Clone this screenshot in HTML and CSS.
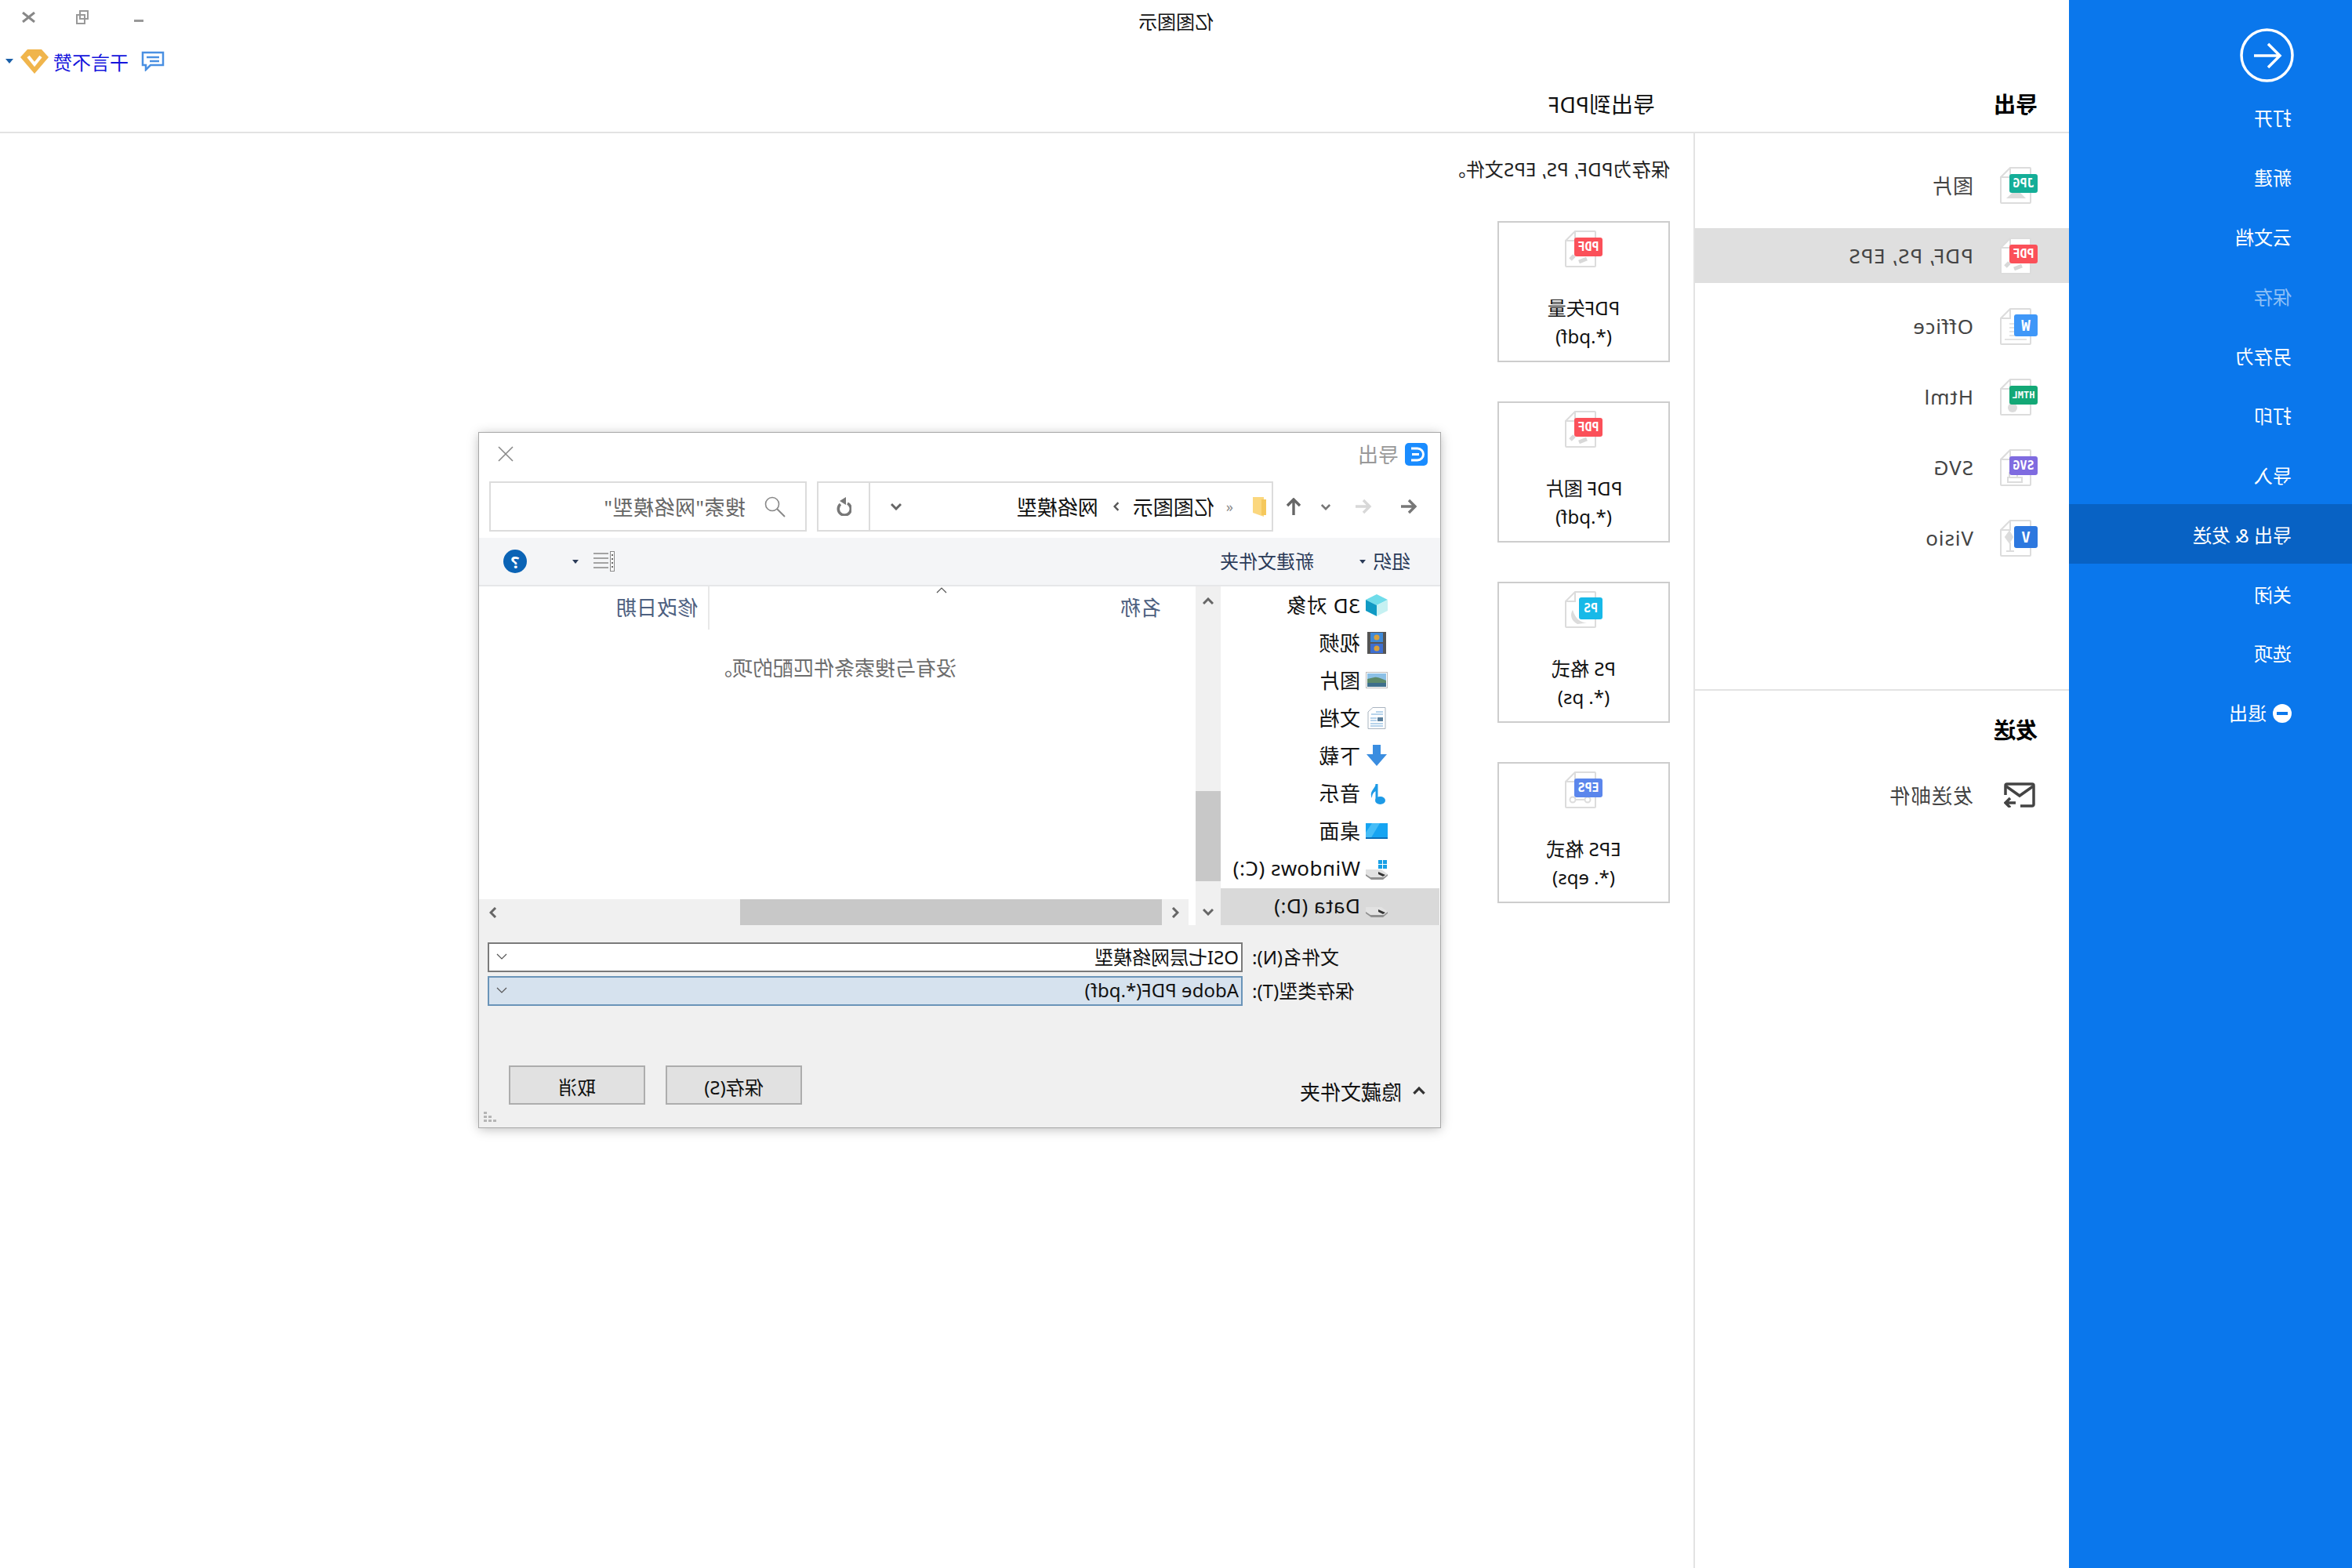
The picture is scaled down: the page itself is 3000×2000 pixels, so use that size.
FILE: index.html
```html
<!DOCTYPE html>
<html lang="zh-CN">
<head>
    <meta charset="UTF-8">
    <title>亿图图示</title>
    <link rel="stylesheet" href="styles.css">
</head>
<body>
    <!-- shared icon parts -->
    <svg class="defs" width="0" height="0">
        <symbol id="sheet" viewBox="0 0 40 47">
            <path d="M1 2a1 1 0 0 1 1-1H27L39 13V45a1 1 0 0 1-1 1H2a1 1 0 0 1-1-1Z" fill="#fff" stroke="#dcdcdc" stroke-width="2"/>
            <path d="M27 1V13H39" fill="none" stroke="#dcdcdc" stroke-width="2"/>
        </symbol>
        <symbol id="chev-down" viewBox="0 0 14 10">
            <path d="M1 2L7 8L13 2" fill="none" stroke="currentColor" stroke-width="3"/>
        </symbol>
        <symbol id="chev-thin" viewBox="0 0 14 8">
            <path d="M1 1L7 7L13 1" fill="none" stroke="#555" stroke-width="1.2"/>
        </symbol>
        <symbol id="chev-left" viewBox="0 0 10 14">
            <path d="M8 1L2 7L8 13" fill="none" stroke="currentColor" stroke-width="3"/>
        </symbol>
        <symbol id="arrow-left" viewBox="0 0 22 20">
            <path d="M21 10H3M11 2L3 10L11 18" fill="none" stroke="currentColor" stroke-width="3.4"/>
        </symbol>
        <symbol id="drive" viewBox="0 0 28 28">
            <path d="M0 20L8 14H28V20L20 26H6Z" fill="#e2e2e2"/>
            <path d="M0 20L5 24H22L28 20V22L21 27H6L0 22Z" fill="#8f8f8f"/>
            <path d="M3 21L12 17V20L6 23Z" fill="#333"/>
        </symbol>
    </svg>

    <div class="app">
        <!-- blue menu -->
        <nav class="sidebar">
            <svg class="back-btn" viewBox="0 0 69 69">
                <circle cx="34.5" cy="34.5" r="32.5" fill="none" stroke="#fff" stroke-width="3.5"/>
                <path d="M51 35H19M33 20L18 35L33 50" fill="none" stroke="#fff" stroke-width="3.5"/>
            </svg>
            <div class="menu-item">打开</div>
            <div class="menu-item">新建</div>
            <div class="menu-item">云文档</div>
            <div class="menu-item disabled">保存</div>
            <div class="menu-item">另存为</div>
            <div class="menu-item">打印</div>
            <div class="menu-item">导入</div>
            <div class="menu-item active">导出 &amp; 发送</div>
            <div class="menu-item">关闭</div>
            <div class="menu-item">选项</div>
            <div class="menu-item">
                <svg class="exit-icon" viewBox="0 0 24 24">
                    <circle cx="12" cy="12" r="12" fill="#fff"/>
                    <rect x="5" y="10" width="14" height="4" fill="#0a77ec"/>
                </svg>
                退出
            </div>
        </nav>

        <main class="main">
            <header class="topbar">
                <div class="app-title">亿图图示</div>
                <div class="top-tools">
                    <div class="win-btns">
                        <svg class="win-min" viewBox="0 0 12 3"><rect width="12" height="3" fill="#999"/></svg>
                        <svg class="win-restore" viewBox="0 0 16 18">
                            <path d="M1 1H11V11H1Z M5 6H15V17H5Z" fill="#fff" stroke="#999" stroke-width="2"/>
                        </svg>
                        <svg class="win-close" viewBox="0 0 17 14">
                            <path d="M1 1L16 13M16 1L1 13" stroke="#888" stroke-width="3"/>
                        </svg>
                    </div>
                    <div class="account">
                        <svg class="chat-icon" viewBox="0 0 30 26">
                            <path d="M2 2H28V18L24 18V24L18 18H2Z M7 8H23M7 13H19" fill="none" stroke="#4a90e2" stroke-width="2.5"/>
                        </svg>
                        <span class="account-name">干言不赞</span>
                        <svg class="vip-icon" viewBox="0 0 36 32">
                            <path d="M9 1H27L36 11L18 32L0 11Z" fill="#f0b54c"/>
                            <path d="M10 10L18 20L26 10" fill="none" stroke="#fff" stroke-width="4"/>
                        </svg>
                        <span class="caret caret-blue"></span>
                    </div>
                </div>
            </header>

            <div class="heads">
                <div class="head-list">导出</div>
                <div class="head-detail">导出到PDF</div>
            </div>

            <div class="body-row">
                <section class="export-list">
                    <div class="export-rows">
                        <div class="export-row">
                            <span class="file-icon">
                                <svg class="sheet" viewBox="0 0 40 47">
                                    <use href="#sheet"/>
                                    <path d="M7 40L19 28L32 40Z" fill="#dcdcdc"/>
                                </svg>
                                <span class="badge badge-jpg">JPG</span>
                            </span>
                            图片
                        </div>
                        <div class="export-row selected">
                            <span class="file-icon">
                                <svg class="sheet" viewBox="0 0 40 47">
                                    <use href="#sheet"/>
                                    <path d="M12 36L22 40M28 32L33 37" stroke="#d8d8d8" stroke-width="5"/>
                                </svg>
                                <span class="badge badge-pdf">PDF</span>
                            </span>
                            PDF, PS, EPS
                        </div>
                        <div class="export-row">
                            <span class="file-icon">
                                <svg class="sheet" viewBox="0 0 40 47">
                                    <use href="#sheet"/>
                                    <path d="M6 40H34M6 35H28M6 30H28M6 25H28M6 20H28" stroke="#dcdcdc" stroke-width="1.5"/>
                                </svg>
                                <span class="badge badge-tall badge-word">W</span>
                            </span>
                            Office
                        </div>
                        <div class="export-row">
                            <span class="file-icon">
                                <svg class="sheet" viewBox="0 0 40 47">
                                    <use href="#sheet"/>
                                    <circle cx="24" cy="37" r="6" fill="#dcdcdc"/>
                                </svg>
                                <span class="badge badge-html">HTML</span>
                            </span>
                            Html
                        </div>
                        <div class="export-row">
                            <span class="file-icon">
                                <svg class="sheet" viewBox="0 0 40 47">
                                    <use href="#sheet"/>
                                    <path d="M12 36H30V42H12ZM18 30H28V36H18Z" fill="none" stroke="#dcdcdc" stroke-width="2"/>
                                </svg>
                                <span class="badge badge-svg">SVG</span>
                            </span>
                            SVG
                        </div>
                        <div class="export-row">
                            <span class="file-icon">
                                <svg class="sheet" viewBox="0 0 40 47">
                                    <use href="#sheet"/>
                                    <path d="M28 15L33 22L28 29L24 22ZM27 29V40M22 40H32" fill="#dcdcdc" stroke="#dcdcdc" stroke-width="2"/>
                                </svg>
                                <span class="badge badge-tall badge-visio">V</span>
                            </span>
                            Visio
                        </div>
                    </div>

                    <div class="send-block">
                        <div class="head-list">发送</div>
                        <div class="export-row send-row">
                            <span class="file-icon">
                                <svg class="mail-icon" viewBox="0 0 40 32">
                                    <path d="M19 30H4a2 2 0 0 1-2-2V4a2 2 0 0 1 2-2H36a2 2 0 0 1 2 2V16" fill="none" stroke="#444" stroke-width="3.5"/>
                                    <path d="M3 5L20 17L37 5" fill="none" stroke="#444" stroke-width="3.5"/>
                                    <path d="M25 26H37M32 20L38 26L32 32" fill="none" stroke="#444" stroke-width="3.5"/>
                                </svg>
                            </span>
                            发送邮件
                        </div>
                    </div>
                </section>

                <section class="export-detail">
                    <p class="detail-desc">保存为PDF, PS, EPS文件。</p>
                    <div class="card">
                        <span class="file-icon">
                            <svg class="sheet" viewBox="0 0 40 47">
                                <use href="#sheet"/>
                                <path d="M12 36L22 40M28 32L33 37" stroke="#d8d8d8" stroke-width="5"/>
                            </svg>
                            <span class="badge badge-pdf">PDF</span>
                        </span>
                        <div class="card-text">PDF矢量<br>(*.pdf)</div>
                    </div>
                    <div class="card">
                        <span class="file-icon">
                            <svg class="sheet" viewBox="0 0 40 47">
                                <use href="#sheet"/>
                                <path d="M12 36L22 40M28 32L33 37" stroke="#d8d8d8" stroke-width="5"/>
                            </svg>
                            <span class="badge badge-pdf">PDF</span>
                        </span>
                        <div class="card-text">PDF 图片<br>(*.pdf)</div>
                    </div>
                    <div class="card">
                        <span class="file-icon">
                            <svg class="sheet" viewBox="0 0 40 47">
                                <use href="#sheet"/>
                                <path d="M8 40C16 42 26 38 30 24C34 30 32 38 24 42" fill="#dcdcdc"/>
                            </svg>
                            <span class="badge badge-tall badge-ps">PS</span>
                        </span>
                        <div class="card-text">PS 格式<br>(*. ps)</div>
                    </div>
                    <div class="card">
                        <span class="file-icon">
                            <svg class="sheet" viewBox="0 0 40 47">
                                <use href="#sheet"/>
                                <path d="M11 36H30" stroke="#dcdcdc" stroke-width="2"/>
                                <circle cx="11" cy="36" r="3.5" fill="#fff" stroke="#dcdcdc" stroke-width="2"/>
                                <circle cx="30" cy="36" r="3.5" fill="#fff" stroke="#dcdcdc" stroke-width="2"/>
                            </svg>
                            <span class="badge badge-eps">EPS</span>
                        </span>
                        <div class="card-text">EPS 格式<br>(*. eps)</div>
                    </div>
                </section>
            </div>
        </main>

        <!-- save dialog -->
        <div class="dialog">
            <div class="dlg-title">
                <svg class="dlg-logo" viewBox="0 0 29 29">
                    <rect width="29" height="29" rx="5" fill="#1a8cff"/>
                    <path d="M21 7H13a7 7 0 0 0 0 15H21" fill="none" stroke="#fff" stroke-width="3"/>
                    <path d="M11 14.500H20" stroke="#fff" stroke-width="3"/>
                </svg>
                <span>导出</span>
                <svg class="dlg-close" viewBox="0 0 20 20">
                    <path d="M1 1L19 19M19 1L1 19" stroke="#888" stroke-width="1.6"/>
                </svg>
            </div>

            <div class="dlg-nav">
                <svg class="nav-arrow nav-back"><use href="#arrow-left"/></svg>
                <svg class="nav-arrow nav-forward"><use href="#arrow-left"/></svg>
                <svg class="nav-recent"><use href="#chev-down"/></svg>
                <svg class="nav-up" viewBox="0 0 18 22">
                    <path d="M9 22V3M1 10L9 2L17 10" fill="none" stroke="#666" stroke-width="3.400"/>
                </svg>
                <div class="address">
                    <svg class="folder" viewBox="0 0 17 26">
                        <path d="M3 1H17V21L3 26Z" fill="#fbd77e"/>
                        <path d="M0 4H6V24H0Z" fill="#f5c85c"/>
                    </svg>
                    <span class="crumb-more">«</span>
                    <span class="crumb crumb-first">亿图图示</span>
                    <svg class="crumb-sep"><use href="#chev-left"/></svg>
                    <span class="crumb crumb-last">网络模型</span>
                    <svg class="addr-down"><use href="#chev-down"/></svg>
                    <div class="addr-refresh">
                        <svg class="refresh-icon" viewBox="0 0 20 24">
                            <path d="M6 7A8 8 0 1 0 15 6" fill="none" stroke="#777" stroke-width="3.500" transform="matrix(-1 0 0 1 20 2)"/>
                            <path d="M5 0L13 5L5 10Z" fill="#777" transform="translate(2 0)"/>
                        </svg>
                    </div>
                </div>
                <div class="search-box">
                    <svg class="search-icon" viewBox="0 0 27 27">
                        <circle cx="17" cy="10" r="8.500" fill="none" stroke="#888" stroke-width="1.600"/>
                        <path d="M11 16L1 26" stroke="#888" stroke-width="2"/>
                    </svg>
                    <span class="search-text">搜索"网络模型"</span>
                </div>
            </div>

            <div class="dlg-toolbar">
                <span class="tool-organize">组织</span>
                <span class="caret caret-dark caret-organize"></span>
                <span class="tool-newfolder">新建文件夹</span>
                <svg class="view-icon" viewBox="0 0 27 26">
                    <rect x="0.500" y="0.500" width="5" height="25" fill="#fff" stroke="#888"/>
                    <path d="M2 5H4M2 10H4M2 15H4M2 20H4" stroke="#666" stroke-width="2"/>
                    <path d="M8 3H27M8 9H27M8 15H27M8 21H27" stroke="#888" stroke-width="1.500"/>
                </svg>
                <span class="caret caret-dark caret-view"></span>
                <span class="help-btn">?</span>
            </div>

            <div class="dlg-body">
                <div class="nav-pane">
                    <div class="nav-item">
                        <svg class="nav-icon" viewBox="0 0 28 28">
                            <path d="M14 0L28 7L14 14L0 7Z" fill="#6fdcea"/>
                            <path d="M0 7L14 14V28L0 21Z" fill="#c6f1f2"/>
                            <path d="M28 7L14 14V28L28 21Z" fill="#0f9ac4"/>
                        </svg>
                        <span class="nav-label">3D 对象</span>
                    </div>
                    <div class="nav-item">
                        <svg class="nav-icon" viewBox="0 0 28 28">
                            <rect x="2" width="24" height="28" fill="#555"/>
                            <rect x="6" y="1" width="16" height="12" fill="#3f8ad8"/>
                            <rect x="6" y="15" width="16" height="12" fill="#3f6fd0"/>
                            <circle cx="14" cy="7" r="3.500" fill="#d9a13b"/>
                            <circle cx="14" cy="21" r="3.500" fill="#d9a13b"/>
                        </svg>
                        <span class="nav-label">视频</span>
                    </div>
                    <div class="nav-item">
                        <svg class="nav-icon" viewBox="0 0 28 28">
                            <rect x="0.500" y="3.500" width="27" height="20" fill="#fff" stroke="#bbb"/>
                            <rect x="2" y="5" width="24" height="17" fill="#8cc0e6"/>
                            <path d="M2 14C8 12 12 9 17 10C20 11 23 11 26 12V17H2Z" fill="#5d8a6a"/>
                            <rect x="2" y="17" width="24" height="5" fill="#3e6f8c"/>
                        </svg>
                        <span class="nav-label">图片</span>
                    </div>
                    <div class="nav-item">
                        <svg class="nav-icon" viewBox="0 0 28 28">
                            <path d="M3 .500H19L25 6V27.500H3Z" fill="#fff" stroke="#a9b4c0"/>
                            <path d="M6 6H15M6 9H21M14 14H22M14 17H22M6 21H22M6 24H22" stroke="#6fa8d8" stroke-width="1"/>
                            <rect x="6" y="13" width="7" height="5" fill="#5a7f9c"/>
                        </svg>
                        <span class="nav-label">文档</span>
                    </div>
                    <div class="nav-item">
                        <svg class="nav-icon" viewBox="0 0 28 28">
                            <path d="M9 0H19V12H27L14 27L1 12H9Z" fill="#3a8de0"/>
                        </svg>
                        <span class="nav-label">下载</span>
                    </div>
                    <div class="nav-item">
                        <svg class="nav-icon" viewBox="0 0 28 28">
                            <path d="M14 1V21" stroke="#1d9ae6" stroke-width="3"/>
                            <ellipse cx="9.500" cy="22" rx="6.500" ry="5" fill="#1d9ae6"/>
                            <path d="M15 1C16 7 24 10 20 19C20 13 17 11 15 10Z" fill="#1d9ae6"/>
                        </svg>
                        <span class="nav-label">音乐</span>
                    </div>
                    <div class="nav-item">
                        <svg class="nav-icon" viewBox="0 0 28 28">
                            <rect y="3" width="28" height="20" fill="#16a4f2"/>
                            <path d="M10 3H20L28 15V23H22Z" fill="#46bdf7"/>
                            <rect y="21" width="28" height="2" fill="#0c6fb8"/>
                        </svg>
                        <span class="nav-label">桌面</span>
                    </div>
                    <div class="nav-item">
                        <svg class="nav-icon" viewBox="0 0 28 28">
                            <use href="#drive"/>
                            <path d="M1 2H6V7H1ZM7 2H12V7H7ZM1 8H6V13H1ZM7 8H12V13H7Z" fill="#18a0e6"/>
                        </svg>
                        <span class="nav-label">Windows (C:)</span>
                    </div>
                    <div class="nav-item current">
                        <svg class="nav-icon" viewBox="0 0 28 28"><use href="#drive"/></svg>
                        <span class="nav-label">Data (D:)</span>
                    </div>
                </div>

                <div class="vscroll">
                    <svg class="vscroll-up"><use href="#chev-down"/></svg>
                    <div class="vscroll-thumb"></div>
                    <svg class="vscroll-down"><use href="#chev-down"/></svg>
                </div>

                <div class="file-list">
                    <div class="list-head">
                        <span class="col-name">名称</span>
                        <span class="col-date">修改日期</span>
                        <svg class="sort-mark"><use href="#chev-thin"/></svg>
                    </div>
                    <div class="list-empty">没有与搜索条件匹配的项。</div>
                    <div class="hscroll">
                        <svg class="hscroll-left"><use href="#chev-left"/></svg>
                        <div class="hscroll-thumb"></div>
                        <svg class="hscroll-right"><use href="#chev-left"/></svg>
                    </div>
                </div>
            </div>

            <div class="dlg-footer">
                <div class="form-row">
                    <label>文件名(N):</label>
                    <div class="field">OSI七层网络模型<svg class="field-chev"><use href="#chev-thin"/></svg></div>
                </div>
                <div class="form-row">
                    <label>保存类型(T):</label>
                    <div class="field field-selected">Adobe PDF(*.pdf)<svg class="field-chev"><use href="#chev-thin"/></svg></div>
                </div>
                <div class="dlg-actions">
                    <svg class="hide-chev"><use href="#chev-down"/></svg>
                    <span class="hide-folders">隐藏文件夹</span>
                    <button class="dlg-btn">保存(S)</button>
                    <button class="dlg-btn">取消</button>
                </div>
                <svg class="grip" viewBox="0 0 16 14">
                    <path d="M12 0H16V3H12ZM12 5H16V8H12ZM12 10H16V13H12ZM6 5H10V8H6ZM6 10H10V13H6ZM0 10H4V13H0Z" fill="#b5b5b5"/>
                </svg>
            </div>
        </div>
    </div>
</body>
</html>
```

FILE: styles.css
```css
* {
    box-sizing: border-box;
}

body {
    margin: 0;
    background-color: #fff;
    font-family: "Noto Sans", "Noto Sans CJK SC", sans-serif;
    font-size: 24px;
    color: #111;
}

.defs {
    position: absolute;
}

/* the whole window is shown flipped left to right */
.app {
    position: relative;
    display: flex;
    width: 3000px;
    height: 2000px;
    overflow: hidden;
    background-color: #fff;
    transform: scaleX(-1);
}

/* blue menu */
.sidebar {
    flex: 0 0 361px;
    padding-top: 36px;
    background-color: #0a77ec;
    color: #fff;
}

.back-btn {
    display: block;
    width: 69px;
    height: 69px;
    margin: 0 0 7px 74px;
}

.menu-item {
    display: flex;
    align-items: center;
    height: 75.9px;
    padding-top: 3px;
    padding-left: 77px;
    line-height: 36px;
}

.menu-item.disabled {
    color: rgba(255, 255, 255, 0.55);
}

.menu-item.active {
    background-color: #0862c4;
}

.exit-icon {
    width: 24px;
    height: 24px;
    margin-right: 8px;
}

/* main column */
.main {
    flex: 1;
    display: flex;
    flex-direction: column;
    min-width: 0;
}

.topbar {
    display: flex;
    height: 98px;
    padding-left: 1091px;
}

.app-title {
    margin-top: 8px;
    line-height: 40px;
}

.top-tools {
    display: flex;
    flex-direction: column;
    align-items: flex-end;
    margin-left: auto;
}

.win-btns {
    display: flex;
    align-items: center;
    height: 20px;
    margin-top: 12px;
    padding-right: 28px;
}

.win-min {
    width: 12px;
    height: 3px;
    margin: 8px 58px 0 0;
}

.win-restore {
    width: 16px;
    height: 18px;
    margin-right: 52px;
}

.win-close {
    width: 17px;
    height: 14px;
}

.account {
    display: flex;
    align-items: center;
    height: 32px;
    margin-top: 30px;
    padding-right: 7px;
}

.chat-icon {
    width: 30px;
    height: 26px;
    margin-right: 16px;
}

.account-name {
    color: #1414dc;
}

.vip-icon {
    width: 36px;
    height: 32px;
    margin: 0 9px 0 6px;
}

.caret {
    display: inline-block;
    border-top: 6px solid #333;
    border-left: 5px solid transparent;
    border-right: 5px solid transparent;
}

.caret-blue {
    border-top-color: #1a5fa8;
}

.heads {
    display: flex;
    align-items: center;
    height: 72px;
    padding-bottom: 3px;
    border-bottom: 2px solid #e3e3e3;
}

.head-list {
    width: 528px;
    padding-left: 40px;
    font-size: 28px;
    font-weight: 700;
    color: #000;
}

.head-detail {
    font-size: 28px;
    color: #111;
}

.body-row {
    flex: 1;
    display: flex;
}

/* export type list */
.export-list {
    flex: 0 0 479px;
    border-right: 2px solid #e3e3e3;
}

.export-rows {
    display: flex;
    flex-direction: column;
    gap: 20px;
    padding-top: 31px;
}

.export-row {
    display: flex;
    align-items: center;
    gap: 34px;
    height: 70px;
    padding-left: 40px;
    font-size: 26px;
    letter-spacing: 0.9px;
    color: #444;
}

.export-row.selected {
    background-color: #dfdfdf;
}

.file-icon {
    position: relative;
    display: block;
    flex: none;
    width: 48px;
    height: 47px;
}

.sheet {
    position: absolute;
    top: 0;
    right: 0;
    width: 40px;
    height: 47px;
}

.badge {
    position: absolute;
    top: 9px;
    left: 0;
    width: 36px;
    height: 24px;
    border-radius: 3px;
    font-family: "DejaVu Sans Mono", monospace;
    font-size: 15px;
    font-weight: 700;
    letter-spacing: 0;
    line-height: 24px;
    text-align: center;
    color: #fff;
}

.badge-tall {
    top: 8px;
    width: 30px;
    height: 28px;
    font-size: 19px;
    line-height: 28px;
}

.badge-jpg { background-color: #14ae98; }
.badge-pdf { background-color: #fb5059; }
.badge-word { background-color: #3f97f8; }
.badge-html { background-color: #13a876; font-size: 12px; }
.badge-svg { background-color: #7f6be0; }
.badge-visio { background-color: #2d78df; }
.badge-ps { background-color: #17b9e8; font-size: 15px; }
.badge-eps { background-color: #5b86ec; }

.send-block {
    margin-top: 158px;
    padding-top: 30px;
    border-top: 2px solid #e3e3e3;
}

.send-block .head-list {
    width: auto;
    line-height: 40px;
}

.send-row {
    margin-top: 28px;
}

.mail-icon {
    position: absolute;
    top: 7px;
    left: 3px;
    width: 40px;
    height: 32px;
}

/* right side with format cards */
.export-detail {
    flex: 1;
    padding: 28px 0 0 30px;
}

.detail-desc {
    margin: 0 0 48px;
    line-height: 36px;
    letter-spacing: 0.2px;
    color: #222;
}

.card {
    display: flex;
    flex-direction: column;
    align-items: center;
    width: 220px;
    height: 180px;
    margin-bottom: 50px;
    padding-top: 10px;
    border: 2px solid #cdcdcd;
}

.card-text {
    margin-top: 34px;
    line-height: 36px;
    text-align: center;
}

/* save dialog */
.dialog {
    position: absolute;
    top: 552px;
    left: 1163px;
    display: flex;
    flex-direction: column;
    width: 1226px;
    height: 886px;
    background-color: #fff;
    box-shadow: 0 0 0 1px #a8a8a8, 0 2px 14px rgba(0, 0, 0, 0.28);
}

.dlg-title {
    display: flex;
    align-items: center;
    height: 62px;
    padding-bottom: 8px;
    padding-left: 16px;
    font-size: 26px;
    color: #999;
}

.dlg-logo {
    width: 29px;
    height: 29px;
    margin-right: 8px;
}

.dlg-close {
    width: 20px;
    height: 20px;
    margin-left: auto;
    margin-right: 24px;
}

.dlg-nav {
    display: flex;
    align-items: center;
    height: 64px;
    padding-left: 29px;
}

.nav-arrow {
    width: 22px;
    height: 20px;
}

.nav-back {
    color: #777;
}

.nav-forward {
    margin-left: 36px;
    color: #d8d8d8;
}

.nav-recent {
    width: 12px;
    height: 9px;
    margin-left: 31px;
    color: #777;
}

.nav-up {
    width: 18px;
    height: 22px;
    margin: 0 17px 0 26px;
}

.address {
    display: flex;
    align-items: center;
    width: 582px;
    height: 64px;
    padding-left: 7px;
    border: 2px solid #dcdcdc;
    font-size: 26px;
}

.folder {
    width: 17px;
    height: 26px;
}

.crumb-more {
    margin-left: 25px;
    font-size: 18px;
    color: #888;
}

.crumb-first {
    margin-left: 15px;
}

.crumb-sep {
    width: 8px;
    height: 12px;
    margin-left: 17px;
    color: #555;
    transform: scaleX(-1);
}

.crumb-last {
    margin-left: 19px;
}

.addr-down {
    width: 14px;
    height: 10px;
    margin-left: auto;
    margin-right: 26px;
    color: #666;
}

.addr-refresh {
    display: flex;
    align-items: center;
    justify-content: center;
    width: 66px;
    height: 100%;
    border-left: 2px solid #dcdcdc;
}

.refresh-icon {
    width: 20px;
    height: 24px;
}

.search-box {
    display: flex;
    align-items: center;
    gap: 24px;
    width: 405px;
    height: 64px;
    margin-left: 13px;
    padding-left: 25px;
    border: 2px solid #dcdcdc;
    font-size: 26px;
    color: #666;
}

.search-text {
    letter-spacing: 0.5px;
}

.search-icon {
    width: 27px;
    height: 27px;
}

.dlg-toolbar {
    display: flex;
    align-items: center;
    height: 62px;
    margin-top: 8px;
    padding-left: 38px;
    border-bottom: 2px solid #e6e7e9;
    background-color: #f4f5f7;
    color: #2b3b58;
}

.tool-organize,
.tool-newfolder {
    margin-bottom: 3px;
}

.caret-dark {
    border-top-width: 5px;
    border-left-width: 4px;
    border-right-width: 4px;
    border-top-color: #2b3b58;
}

.caret-organize {
    margin-left: 9px;
}

.tool-newfolder {
    margin-left: 58px;
}

.view-icon {
    width: 27px;
    height: 26px;
    margin-left: 772px;
}

.caret-view {
    margin-left: 19px;
}

.help-btn {
    width: 30px;
    height: 30px;
    margin-left: 58px;
    border-radius: 50%;
    background-color: #0a63b5;
    font-size: 22px;
    font-weight: 700;
    line-height: 30px;
    text-align: center;
    color: #fff;
}

.dlg-body {
    display: flex;
    height: 432px;
}

.nav-pane {
    flex: 0 0 280px;
    padding-left: 1px;
}

.nav-item {
    display: flex;
    align-items: center;
    gap: 7px;
    height: 48.1px;
    padding-left: 66px;
    font-size: 26px;
    color: #111;
}

.nav-label {
    margin-bottom: 3px;
    letter-spacing: 0.5px;
}

.nav-item.current {
    background-color: #d9d9d9;
}

.nav-icon {
    width: 28px;
    height: 28px;
    flex: none;
}

.vscroll {
    position: relative;
    flex: 0 0 32px;
    background-color: #f0f0f0;
}

.vscroll-up,
.vscroll-down {
    position: absolute;
    left: 9px;
    width: 14px;
    height: 10px;
    color: #666;
}

.vscroll-up {
    top: 14px;
    transform: scaleY(-1);
}

.vscroll-down {
    bottom: 12px;
}

.vscroll-thumb {
    position: absolute;
    top: 261px;
    left: 0;
    width: 32px;
    height: 115px;
    background-color: #c8c8c8;
}

.file-list {
    flex: 1;
    display: flex;
    flex-direction: column;
    margin-left: 9px;
    min-width: 0;
}

.list-head {
    position: relative;
    display: flex;
    align-items: flex-start;
    height: 55px;
    padding-top: 9px;
    font-size: 26px;
    line-height: 36px;
    color: #4d6080;
}

.col-name {
    width: 611px;
    padding-left: 35px;
}

.col-date {
    height: 55px;
    margin-top: -9px;
    padding: 9px 0 0 13px;
    border-left: 2px solid #e8e8e8;
}

.sort-mark {
    position: absolute;
    top: 1px;
    left: 308px;
    width: 14px;
    height: 8px;
    transform: scaleY(-1);
}

.list-empty {
    flex: 1;
    padding: 31px 0 0 296px;
    font-size: 26px;
    line-height: 36px;
    color: #6d6d6d;
}

.hscroll {
    display: flex;
    align-items: center;
    height: 33px;
    background-color: #f0f0f0;
}

.hscroll-left,
.hscroll-right {
    width: 10px;
    height: 14px;
    color: #666;
}

.hscroll-left {
    margin-left: 12px;
    margin-right: 12px;
}

.hscroll-thumb {
    width: 538px;
    height: 33px;
    background-color: #c8c8c8;
}

.hscroll-right {
    margin-left: auto;
    margin-right: 13px;
    transform: scaleX(-1);
}

.dlg-footer {
    position: relative;
    flex: 1;
    padding-top: 22px;
    background-color: #f0f0f0;
}

.form-row {
    display: flex;
    align-items: center;
    height: 38px;
    margin-bottom: 5px;
}

.form-row label {
    width: 240px;
    margin-bottom: 3px;
    text-align: right;
}

.field {
    position: relative;
    display: flex;
    align-items: center;
    width: 963px;
    height: 38px;
    margin-left: 12px;
    padding-bottom: 3px;
    padding-left: 3px;
    border: 2px solid #7a7a7a;
    background-color: #fff;
}

.field-selected {
    border-color: #6a94b8;
    background-color: #d6e2ee;
}

.field-chev {
    position: absolute;
    top: 12px;
    right: 9px;
    width: 14px;
    height: 8px;
}

.dlg-actions {
    display: flex;
    align-items: center;
    height: 50px;
    margin-top: 76px;
    padding: 0 38px 0 19px;
}

.hide-chev {
    width: 16px;
    height: 11px;
    margin-top: 14px;
    transform: scaleY(-1);
    color: #333;
}

.hide-folders {
    margin: 16px 0 0 14px;
    font-size: 26px;
}

.dlg-btn {
    width: 174px;
    height: 50px;
    padding-top: 3px;
    border: 2px solid #adadad;
    background-color: #e1e1e1;
    font-family: inherit;
    font-size: 24px;
    color: #111;
}

.dlg-btn:first-of-type {
    margin-left: auto;
}

.dlg-btn + .dlg-btn {
    margin-left: 26px;
}

.grip {
    position: absolute;
    right: 6px;
    bottom: 6px;
    width: 16px;
    height: 14px;
}
```
